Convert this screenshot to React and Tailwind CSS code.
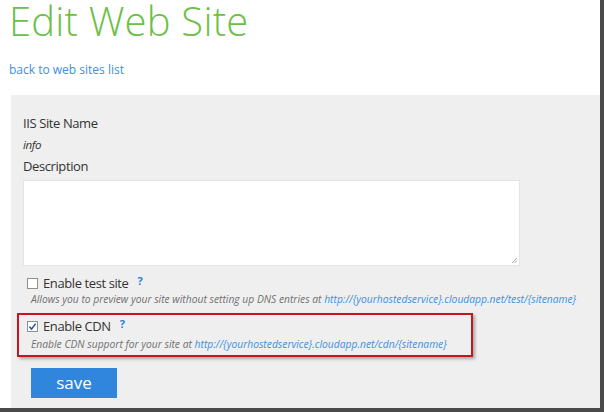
import React from 'react';

const font = { fontFamily: '"Open Sans", "Noto Sans", sans-serif' };

function Help() {
  return <span className="ml-[9px] text-[11px] font-bold text-[#2b7fd6] self-start leading-[14px]">?</span>;
}

function Check({ checked }) {
  return (
    <span className="w-[11px] h-[11px] border border-[#8f8f8f] bg-white flex items-center justify-center shrink-0">
      {checked && (
        <svg viewBox="0 0 10 10" className="w-[9px] h-[9px]">
          <path d="M1.5 5.2 L4 7.8 L8.5 1.8" fill="none" stroke="#2a4d8f" strokeWidth="1.6" />
        </svg>
      )}
    </span>
  );
}

export default function App() {
  return (
    <div className="w-[604px] h-[412px] bg-white overflow-hidden" style={font}>
      <div className="w-[604px] h-[412px] border-r-[4px] border-b-[4px] border-[#4a4a4a] flex flex-col">
        <h1 className="pl-[9px] text-[40px] leading-[42px] font-light text-[#6cbf47] tracking-[0.2px] whitespace-nowrap">
          Edit Web Site
        </h1>
        <a className="pl-[9px] mt-[19px] text-[12px] leading-[18px] text-[#3c8fdf]">back to web sites list</a>
        <div className="ml-[11px] mt-[16px] flex-1 bg-[#efefef] pl-[12px] pt-[19px] text-[#333] tracking-[-0.4px]">
          <div className="text-[13px] leading-[18px]">IIS Site Name</div>
          <div className="mt-[5px] text-[11.5px] italic leading-[16px]">info</div>
          <div className="mt-[4px] text-[13px] leading-[18px]">Description</div>
          <div className="mt-[5px] w-[497px] h-[86px] bg-white border border-[#e4e4e4] relative">
            <svg viewBox="0 0 8 8" className="absolute right-[1px] bottom-[1px] w-[7px] h-[7px]">
              <path d="M7 1 L1 7 M7 4 L4 7" stroke="#999" strokeWidth="1" />
            </svg>
          </div>
          <div className="mt-[8px] pl-[4px] flex items-center text-[13px] leading-[18px]">
            <Check />
            <span className="ml-[5px]">Enable test site</span>
            <Help />
          </div>
          <div className="-mt-[1px] pl-[8px] text-[10.3px] italic leading-[16px] text-[#6f6f6f] tracking-normal">
            Allows you to preview your site without setting up DNS entries at{' '}
            <span className="text-[#3c8fdf]">http://{'{yourhostedservice}'}.cloudapp.net/test/{'{sitename}'}</span>
          </div>
          <div className="mt-[6px] -ml-[6px] w-[456px] h-[44px] border-2 border-[#c4161c] shadow-[2px_2px_3px_rgba(0,0,0,0.3)] pl-[8px] pt-[2px]">
            <div className="flex items-center text-[13px] leading-[18px]">
              <Check checked />
              <span className="ml-[5px]">Enable CDN</span>
              <Help />
            </div>
            <div className="mt-[1px] pl-[4px] text-[10.3px] italic leading-[16px] text-[#6f6f6f] tracking-normal">
              Enable CDN support for your site at{' '}
              <span className="text-[#3c8fdf]">http://{'{yourhostedservice}'}.cloudapp.net/cdn/{'{sitename}'}</span>
            </div>
          </div>
          <button className="mt-[11px] ml-[8px] w-[86px] h-[30px] bg-[#2f86dc] text-white text-[17px] leading-[30px] tracking-normal">
            save
          </button>
        </div>
      </div>
    </div>
  );
}
